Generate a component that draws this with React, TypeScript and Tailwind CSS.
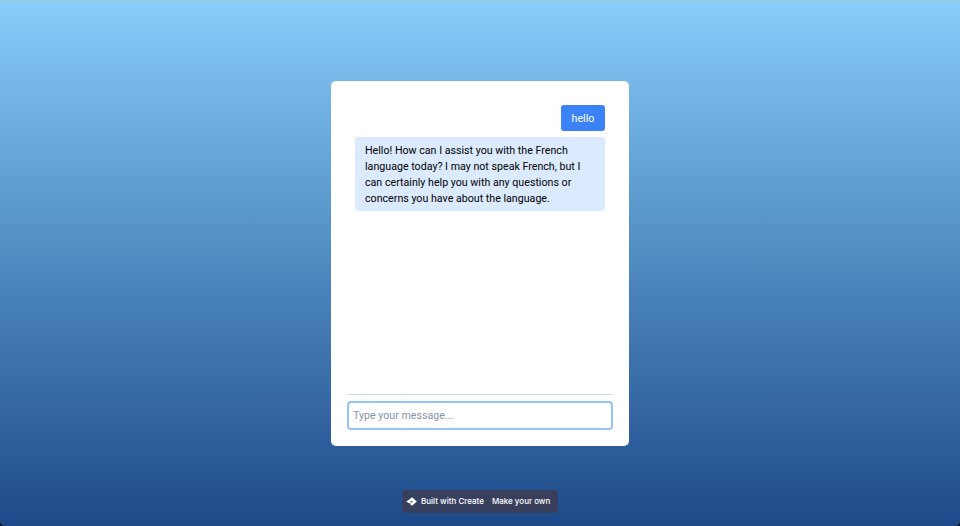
import React from "react";

function CreateLogo() {
  return (
    <svg width="11" height="9" viewBox="0 0 11 9" className="shrink-0">
      <path d="M6 0.3 L10.8 4.5 L6 8.7 L4 7 L6.6 4.5 L6 3.9 L4.4 3.9 L4.4 5.1 L5.6 5.1 L4.6 6.2 L3.2 6.2 L0.2 4.5 L3.4 2.6 Z" fill="#ffffff" />
    </svg>
  );
}

function CreateBadge() {
  return (
    <div className="absolute bottom-[13px] left-1/2 -translate-x-1/2 flex h-[23px] w-[156px] items-center rounded-[3px] bg-[#38405f] pb-[1px] pl-[4px] pr-[3px] font-['Inter',sans-serif] text-[8px] font-medium text-white">
      <CreateLogo />
      <span className="ml-[4px] whitespace-nowrap">Built with Create</span>
      <span className="ml-[3px] flex h-[19px] items-center whitespace-nowrap rounded-[2px] bg-[#3a3f5c] px-[5px]">Make your own</span>
    </div>
  );
}

export default function App() {
  return (
    <div className="h-screen w-full bg-[#101828]">
      <div className="relative flex h-full w-full items-center justify-center rounded-b-[5px] border-t border-[#a3c4dc] bg-gradient-to-b from-[#87cefa] to-[#1e4a8a] font-['Roboto',sans-serif]">
        <div className="mt-[-1px] flex h-[365px] w-[298px] flex-col rounded-[5px] bg-white p-4">
          <div className="flex flex-1 flex-col gap-[6px] px-2 pt-2">
            <div className="self-end rounded-[3px] bg-[#3b82f6] px-[10.67px] pb-[4px] pt-[6px] text-[10.67px] leading-4 text-white">hello</div>
            <div className="rounded-[3px] bg-[#dbeafe] pb-[4px] pl-[10px] pr-[10.67px] pt-[6px] text-[10.67px] leading-4 text-black">
              Hello! How can I assist you with the French language today? I may not speak French, but I can certainly help you with any questions or concerns you have about the language.
            </div>
          </div>
          <div className="border-t border-[#bfdbfe] pt-[6px]">
            <input
              readOnly
              placeholder="Type your message..."
              className="h-[29px] w-full rounded-[4px] border-2 border-[#93c5fd] px-[4px] text-[10.67px] outline-none placeholder:text-[#8893a8]"
            />
          </div>
        </div>
        <CreateBadge />
      </div>
    </div>
  );
}
